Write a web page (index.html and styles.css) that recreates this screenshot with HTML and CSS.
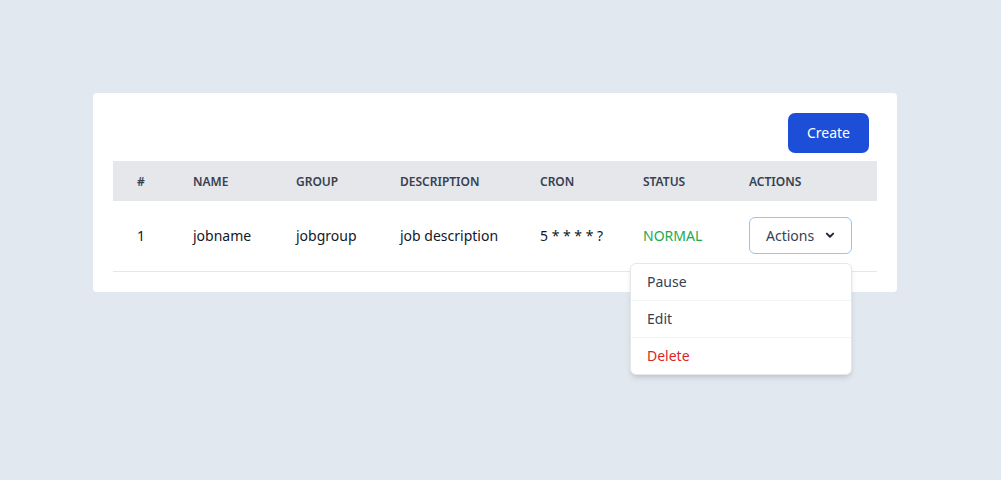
FILE: index.html
```html
<!DOCTYPE html>
<html>
<head>
<meta charset="utf-8">
<link rel="stylesheet" href="styles.css">
</head>
<body>
<div class="page">
  <div class="card">
    <div class="toolbar">
      <button class="btn-create">Create</button>
    </div>
    <table class="jobs">
      <colgroup>
        <col style="width:56px">
        <col style="width:103px">
        <col style="width:104px">
        <col style="width:140px">
        <col style="width:103px">
        <col style="width:106px">
        <col style="width:152px">
      </colgroup>
      <thead>
        <tr>
          <th>#</th>
          <th>Name</th>
          <th>Group</th>
          <th>Description</th>
          <th>Cron</th>
          <th>Status</th>
          <th>Actions</th>
        </tr>
      </thead>
      <tbody>
        <tr>
          <td>1</td>
          <td>jobname</td>
          <td>jobgroup</td>
          <td>job description</td>
          <td>5 * * * * ?</td>
          <td class="status">NORMAL</td>
          <td class="actions-cell">
            <div class="dropdown">
              <button class="btn-actions">Actions
                <svg class="chev" width="14" height="14" viewBox="0 0 20 20"><path d="M5.5 8l4.5 4.5 4.5-4.5" fill="none" stroke="#1f2937" stroke-width="2.8" stroke-linecap="round" stroke-linejoin="round"/></svg>
              </button>
              <ul class="menu">
                <li>Pause</li>
                <li>Edit</li>
                <li class="danger">Delete</li>
              </ul>
            </div>
          </td>
        </tr>
      </tbody>
    </table>
  </div>
</div>
</body>
</html>
```
FILE: styles.css
```css
* { box-sizing: border-box; }
html, body { margin: 0; padding: 0; }
body {
  background: #e2e8f0;
  font-family: "Noto Sans", "Open Sans", sans-serif;
  color: #111827;
  width: 1001px;
  height: 480px;
}
.page {
  padding: 93px 104px 0 93px;
}
.card {
  width: 804px;
  background: #fff;
  border-radius: 4px;
  padding: 20px;
}
.toolbar {
  display: flex;
  justify-content: flex-end;
  padding-right: 8px;
  margin-bottom: 8px;
}
.btn-create {
  width: 81px;
  height: 40px;
  background: #1d4ed8;
  color: #fff;
  border: none;
  border-radius: 7px;
  font-family: inherit;
  font-size: 14px;
  padding: 0 0 2px;
}
.jobs {
  width: 764px;
  border-collapse: collapse;
  table-layout: fixed;
}
.jobs th {
  background: #e5e7eb;
  height: 40px;
  padding: 0 0 0 24px;
  text-align: left;
  font-size: 12px;
  font-weight: 600;
  text-transform: uppercase;
  color: #374151;
}
.jobs td {
  height: 70px;
  padding: 0 0 0 24px;
  font-size: 14px;
  color: #111827;
  border-bottom: 1px solid #e5e7eb;
}
.jobs td.status { color: #22a94f; }
.dropdown { position: relative; width: 103px; }
.btn-actions {
  width: 103px;
  height: 37px;
  background: #fff;
  border: 1px solid #93c5fd;
  border-radius: 6px;
  font-family: inherit;
  font-size: 14px;
  color: #374151;
  display: flex;
  align-items: center;
  padding: 0 0 1px 16px;
  gap: 9px;
}
.chev { display: block; }
.menu {
  position: absolute;
  top: 46px;
  right: 0;
  width: 222px;
  margin: 0;
  padding: 0;
  list-style: none;
  background: #fff;
  border: 1px solid #e5e7eb;
  border-radius: 6px;
  box-shadow: 0 4px 6px -1px rgba(0,0,0,0.1), 0 2px 4px -2px rgba(0,0,0,0.1);
  z-index: 10;
}
.menu li {
  height: 37px;
  display: flex;
  align-items: center;
  padding-left: 16px;
  padding-bottom: 1px;
  font-size: 14px;
  color: #374151;
  border-bottom: 1px solid #f3f4f6;
}
.menu li:last-child { border-bottom: none; height: 36px; }
.menu li.danger { color: #dc2626; }
```
